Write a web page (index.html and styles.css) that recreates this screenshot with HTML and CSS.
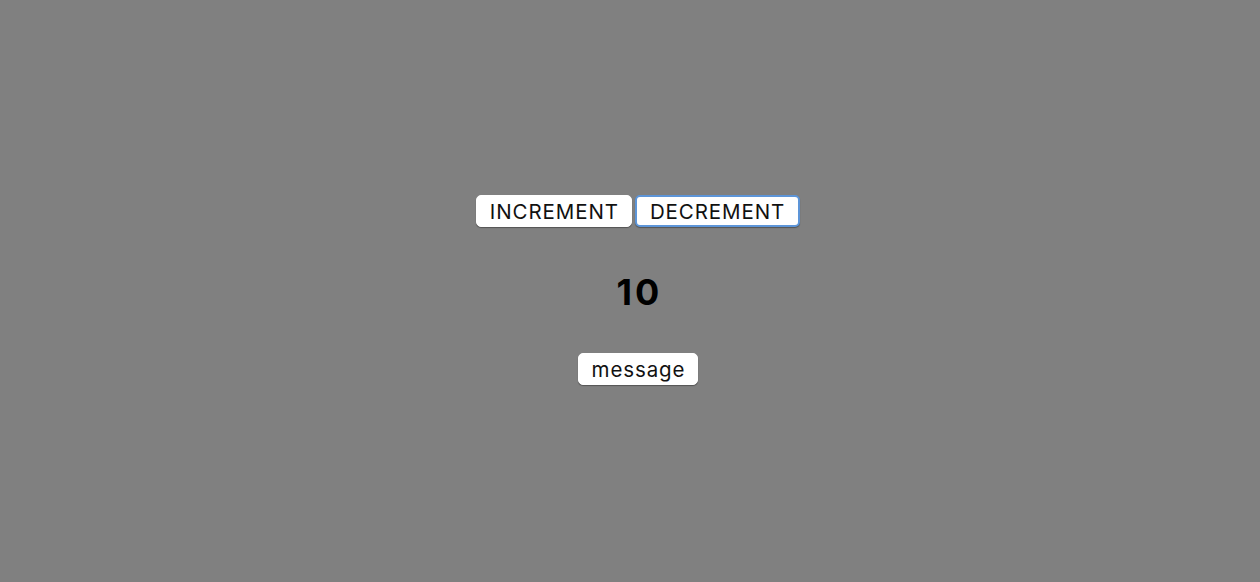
FILE: index.html
```html
<!DOCTYPE html>
<html>
<head>
<meta charset="utf-8">
<link rel="stylesheet" href="styles.css">
</head>
<body>
<div class="app">
  <div class="row">
    <button class="btn">INCREMENT</button>
    <button class="btn focused">DECREMENT</button>
  </div>
  <h2 class="count">10</h2>
  <button class="btn">message</button>
</div>
</body>
</html>
```
FILE: styles.css
```css
html, body {
  margin: 0;
  height: 100%;
}
body {
  background: #808080;
  font-family: Inter, "Noto Sans", sans-serif;
}
.app {
  height: 100%;
  box-sizing: border-box;
  padding-left: 16px;
  padding-bottom: 2px;
  display: flex;
  flex-direction: column;
  align-items: center;
  justify-content: center;
}
.row {
  display: flex;
  gap: 3px;
}
.btn {
  font-family: Inter, "Noto Sans", sans-serif;
  font-size: 20.5px;
  letter-spacing: 0.9px;
  color: #111;
  background: #fff;
  border: 1px solid #fff;
  border-radius: 5px;
  height: 32px;
  padding: 1px 12px 0 13px;
  box-shadow: 0 1px 1px rgba(0,0,0,0.35);
  line-height: 30px;
}
.btn.focused {
  border: 2px solid #5d95d8;
  padding: 1px 13px 0 13px;
  line-height: 27px;
}
.count {
  margin: 45px 0 41px;
  font-size: 36px;
  font-weight: 700;
  letter-spacing: 3px;
  padding-left: 3px;
  line-height: 40px;
  color: #000;
}
```
